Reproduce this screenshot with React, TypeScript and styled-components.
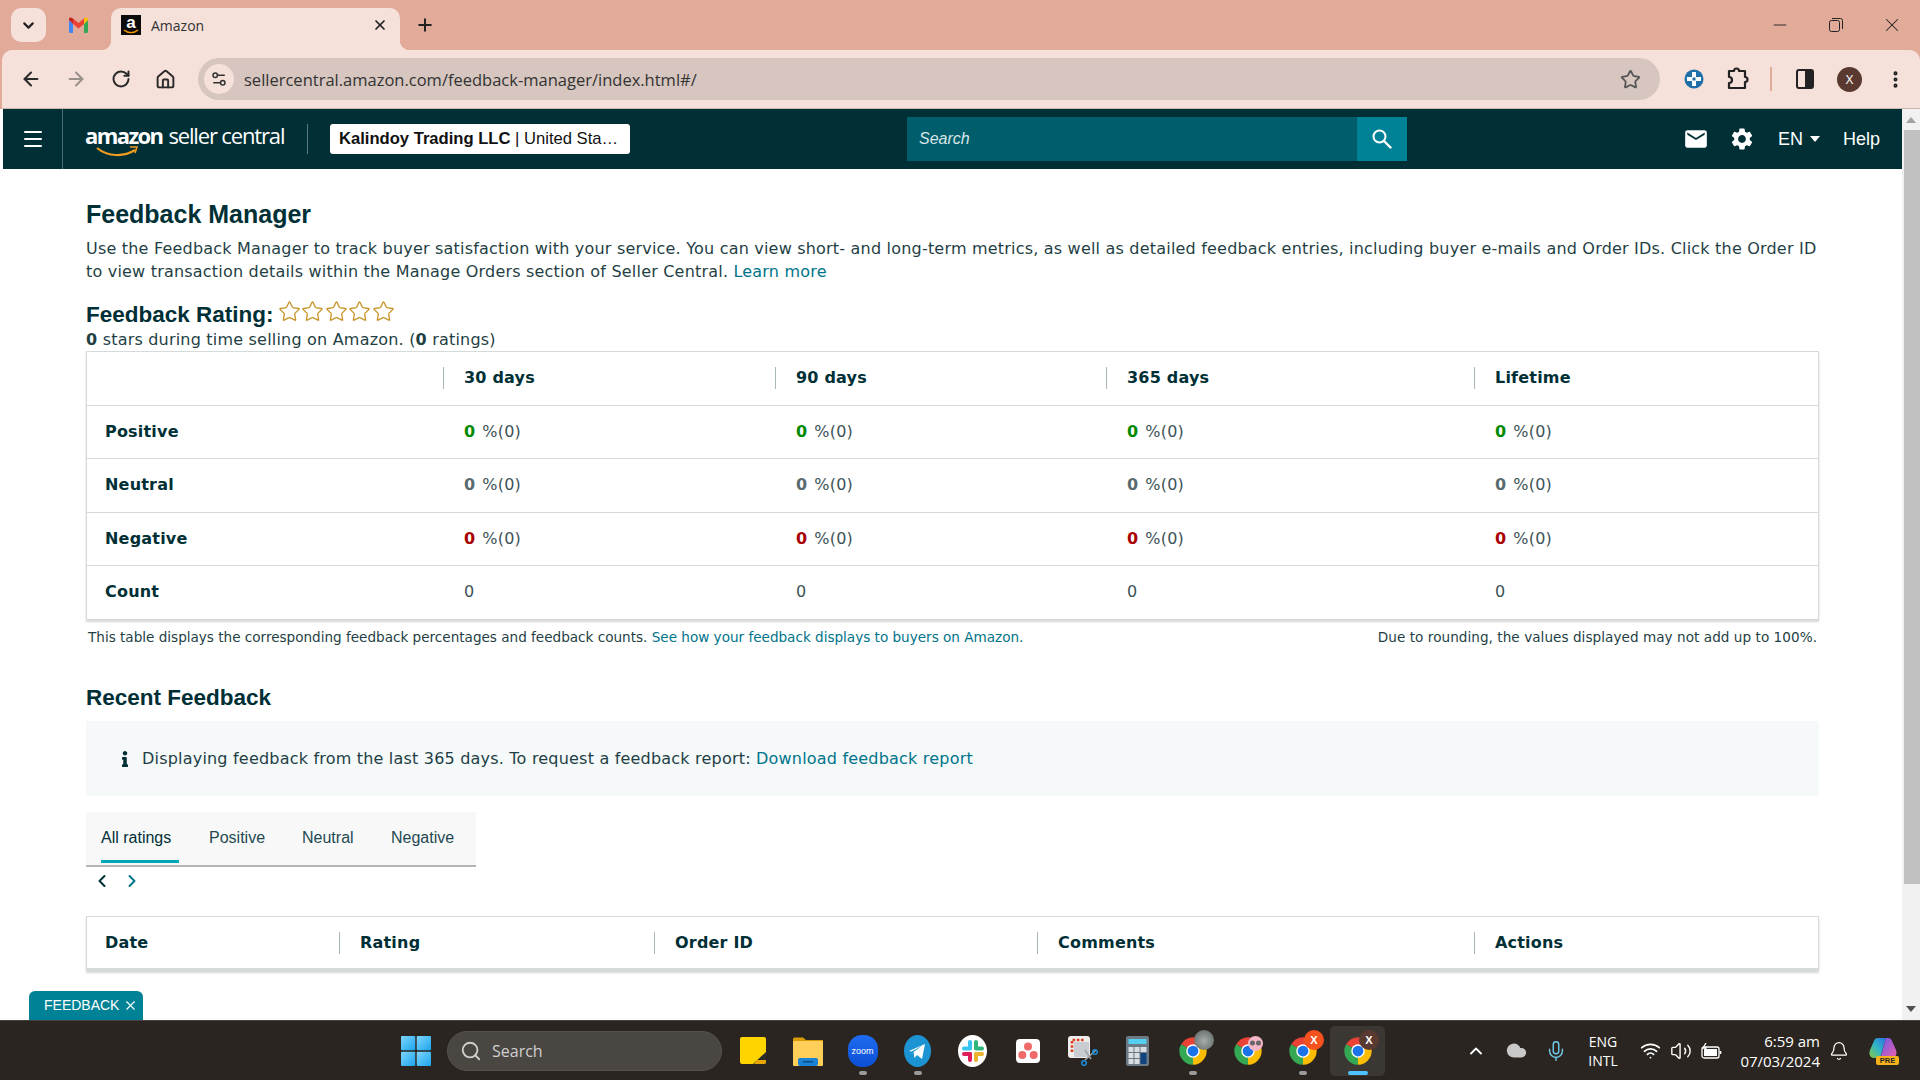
import React from "react";
import styled, { createGlobalStyle } from "styled-components";
import {
  ArrowLeft,
  ArrowRight,
  ChevronDown,
  ChevronLeft,
  ChevronRight,
  ChevronUp,
  Cloud,
  Bell,
  Home,
  Menu,
  Mic,
  MoreVertical,
  Plus,
  RotateCw,
  Search,
  Settings2,
  Star,
  Volume2,
  Wifi,
  X,
  Minus,
} from "lucide-react";
import { MdEmail, MdSettings } from "react-icons/md";
import { FaInfo } from "react-icons/fa";

const GlobalStyle = createGlobalStyle`
  html, body { margin: 0; padding: 0; background: #fff; overflow: hidden; }
  * { box-sizing: border-box; }
`;

const UI_FONT = `"Liberation Sans", Arial, sans-serif`;
const BODY_FONT = `"DejaVu Sans", Verdana, sans-serif`;
const WIN_FONT = `"Open Sans", "Noto Sans", sans-serif`;

const Screen = styled.div`
  width: 1920px;
  height: 1080px;
  display: flex;
  flex-direction: column;
  overflow: hidden;
  background: #fff;
`;

/* browser chrome */
const BrowserHead = styled.div`
  height: 109px;
  flex: none;
  background: #e2aa99;
`;

const TabStrip = styled.div`
  height: 50px;
  display: flex;
  align-items: flex-end;
  padding-left: 11px;
`;

const TabDropdown = styled.div`
  width: 35px;
  height: 34px;
  margin-bottom: 8px;
  background: #f5e0da;
  border-radius: 10px;
  display: flex;
  align-items: center;
  justify-content: center;
  color: #222;
`;

const InactiveTab = styled.div`
  width: 65px;
  height: 42px;
  padding-bottom: 8px;
  display: flex;
  align-items: center;
  justify-content: center;
`;

const ActiveTab = styled.div`
  position: relative;
  width: 289px;
  height: 42px;
  background: #f5e0da;
  border-radius: 10px 10px 0 0;
  display: flex;
  align-items: center;
  padding: 0 12px 8px 10px;
  gap: 10px;
  font: 14px ${WIN_FONT};
  color: #333;

  &::before,
  &::after {
    content: "";
    position: absolute;
    bottom: 0;
    width: 10px;
    height: 10px;
  }
  &::before {
    left: -10px;
    background: radial-gradient(circle at 0 0, transparent 10px, #f5e0da 10.5px);
  }
  &::after {
    right: -10px;
    background: radial-gradient(circle at 100% 0, transparent 10px, #f5e0da 10.5px);
  }
`;

const Favicon = styled.div`
  position: relative;
  width: 20px;
  height: 20px;
  background: #0b0b0b;
  color: #fff;
  font: bold 17px/15px ${UI_FONT};
  text-align: center;
`;

const FaviconSmile = styled.svg`
  position: absolute;
  left: 2px;
  bottom: 1px;
`;

const TabTitle = styled.span`
  flex: 1;
`;

const NewTab = styled.div`
  width: 50px;
  height: 42px;
  padding-bottom: 8px;
  display: flex;
  align-items: center;
  justify-content: center;
  color: #222;
`;

const WindowControls = styled.div`
  margin-left: auto;
  height: 50px;
  display: flex;
  align-items: center;
  color: #222;
`;

const WindowButton = styled.div`
  width: 56px;
  display: flex;
  justify-content: center;
`;

const Toolbar = styled.div`
  height: 59px;
  margin-left: 2px;
  background: #f5e0da;
  border-radius: 10px 10px 0 0;
  display: flex;
  align-items: center;
  padding-left: 6px;
  border-bottom: 1px solid #c9b6af;
`;

const NavButton = styled.div<{ $dim?: boolean }>`
  width: 45px;
  display: flex;
  justify-content: center;
  color: ${(p) => (p.$dim ? "#9b8f8b" : "#2a2a2a")};
`;

const UrlPill = styled.div`
  width: 1462px;
  height: 42px;
  margin-left: 10px;
  background: #d6c6bf;
  border-radius: 21px;
  display: flex;
  align-items: center;
  padding: 0 19px 0 6px;
`;

const SiteInfo = styled.div`
  width: 30px;
  height: 30px;
  border-radius: 50%;
  background: #f5e0da;
  display: flex;
  align-items: center;
  justify-content: center;
  color: #333;
`;

const UrlText = styled.span`
  margin-left: 10px;
  flex: 1;
  font: 16.5px ${WIN_FONT};
  color: #333;
`;

const ToolbarIcons = styled.div`
  display: flex;
  align-items: center;
  margin-left: 12px;
  color: #222;
`;

const ToolbarSlot = styled.div<{ $w: number }>`
  width: ${(p) => p.$w}px;
  display: flex;
  justify-content: center;
`;

const ToolbarRule = styled.div`
  width: 2px;
  height: 24px;
  background: #e2aa99;
  margin: 0 11px 0 10px;
`;

const Avatar = styled.div`
  width: 25px;
  height: 25px;
  border-radius: 50%;
  background: #5a3a30;
  color: #fff;
  font: 13px/25px ${WIN_FONT};
  text-align: center;
`;

/* page */
const PageArea = styled.div`
  position: relative;
  flex: 1;
  min-height: 0;
  display: flex;
  padding-left: 3px;
`;

const Page = styled.div`
  flex: 1;
  min-width: 0;
  display: flex;
  flex-direction: column;
`;

const SellerNav = styled.div`
  height: 60px;
  flex: none;
  background: #002f36;
  display: flex;
  align-items: center;
  color: #fff;
`;

const BurgerCell = styled.div`
  width: 60px;
  height: 100%;
  border-right: 1px solid #4d6b70;
  display: flex;
  align-items: center;
  justify-content: center;
`;

const Logo = styled.div`
  position: relative;
  margin-left: 22px;
  width: 201px;
  height: 40px;
  display: flex;
  align-items: baseline;
  gap: 6px;
  font-family: ${WIN_FONT};
  color: #fff;
  white-space: nowrap;
  padding-top: 1px;
`;

const LogoBrand = styled.span`
  font-size: 22px;
  font-weight: 700;
  letter-spacing: -1.6px;
`;

const LogoProduct = styled.span`
  font-size: 22px;
  font-weight: 400;
  letter-spacing: -1.15px;
`;

const LogoSmile = styled.svg`
  position: absolute;
  left: 11px;
  top: 27px;
`;

const NavRule = styled.div`
  width: 1px;
  height: 30px;
  background: #5d7a7e;
  margin: 0 22px 0 21px;
`;

const AccountBox = styled.div`
  width: 300px;
  height: 30px;
  background: #fff;
  border-radius: 3px;
  color: #111;
  font: 16.6px/30px ${UI_FONT};
  padding: 0 9px;
  white-space: nowrap;
`;

const SearchBox = styled.div`
  margin-left: 277px;
  width: 500px;
  height: 44px;
  background: #005d6b;
  display: flex;
  align-items: center;
  justify-content: space-between;
  padding-left: 12px;
  font: italic 16px ${UI_FONT};
  color: #d9e6e8;
`;

const SearchButton = styled.div`
  width: 50px;
  height: 44px;
  background: #008296;
  display: flex;
  align-items: center;
  justify-content: center;
  color: #fff;
`;

const NavTools = styled.div`
  margin-left: auto;
  display: flex;
  align-items: center;
  font: 18px ${UI_FONT};
  padding-right: 22px;
  gap: 23px;
`;

const MailGlyph = styled(MdEmail)`
  margin-right: -3px;
`;

const LangCaret = styled.span`
  display: inline-block;
  width: 0;
  height: 0;
  margin-left: 7px;
  vertical-align: 3px;
  border-left: 5.5px solid transparent;
  border-right: 5.5px solid transparent;
  border-top: 6px solid #fff;
`;

const Content = styled.div`
  flex: 1;
  padding: 30px 82px 0 83px;
  font: 16px/24px ${BODY_FONT};
  letter-spacing: 0.2px;
  color: #002f36;
`;

const PageTitle = styled.h1`
  margin: 0 0 8px;
  font: bold 25px/30px ${UI_FONT};
  letter-spacing: 0;
  color: #002f36;
`;

const Lead = styled.p`
  margin: 0;
  line-height: 23px;
  color: #1f3f45;
`;

const Link = styled.span`
  color: #00748a;
`;

const RatingRow = styled.div`
  margin-top: 16.5px;
  display: flex;
  align-items: center;
  height: 30px;
`;

const RatingTitle = styled.h2`
  margin: 0 4px 0 0;
  font: bold 22.5px/30px ${UI_FONT};
  letter-spacing: 0;
  color: #002f36;
`;

const Stars = styled.div`
  display: flex;
  color: #c9952b;
  margin-top: -7px;
  gap: 0.5px;
`;

const RatingNote = styled.div`
  height: 21px;
  line-height: 20px;
  color: #1f3f45;
`;

const DataTable = styled.div`
  width: 1733px;
  border: 1px solid #d5dbdb;
  box-shadow: 0 2px 2px rgba(0, 0, 0, 0.16);
  background: #fff;
`;

const DataRow = styled.div<{ $cols: string; $h: number }>`
  display: grid;
  grid-template-columns: ${(p) => p.$cols};
  height: ${(p) => p.$h}px;
  align-items: center;
  border-top: 1px solid #d5dbdb;

  &:first-child {
    border-top: 0;
  }
`;

const RowHead = styled.div`
  padding-left: 18px;
  font-weight: 700;
  color: #002f36;
`;

const HeadCell = styled.div<{ $rule?: boolean }>`
  padding-left: ${(p) => (p.$rule ? 20 : 18)}px;
  font-weight: 700;
  color: #002f36;
  height: 22px;
  line-height: 22px;
  border-left: ${(p) => (p.$rule ? "1px solid #aab7b8" : "0")};
`;

const ValueCell = styled.div`
  padding-left: 21px;
  color: #3d5358;
`;

const Num = styled.b<{ $tone: string }>`
  color: ${(p) => p.$tone};
  margin-right: 7px;
`;

const TableNote = styled.div`
  display: flex;
  justify-content: space-between;
  padding: 0 3px 0 2px;
  margin-top: 6px;
  font: 13.6px/22px ${BODY_FONT};
  letter-spacing: 0;
  color: #1f3f45;
`;

const NoteLeft = styled.span`
  letter-spacing: -0.015px;
`;

const NoteRight = styled.span`
  letter-spacing: 0.04px;
`;

const SectionTitle = styled.h2`
  margin: 35px 0 0;
  font: bold 22.5px/30px ${UI_FONT};
  letter-spacing: 0;
  color: #002f36;
`;

const InfoBox = styled.div`
  margin-top: 8px;
  width: 1733px;
  height: 75px;
  background: #f5f9fa;
  display: flex;
  align-items: center;
  padding: 1px 0 0 31px;
  color: #1f3f45;
`;

const InfoIcon = styled.span`
  width: 25px;
  color: #002f36;
  display: flex;
`;

const TabsBar = styled.div`
  margin-top: 16px;
  width: 390px;
  height: 55px;
  background: #f8f8f8;
  border-bottom: 2px solid #b4b4b4;
  display: flex;
  padding-left: 15px;
  font: 16px ${UI_FONT};
  letter-spacing: 0;
`;

const RatingTab = styled.div<{ $active?: boolean; $w: number }>`
  width: ${(p) => p.$w}px;
  height: 51px;
  line-height: 52px;
  color: ${(p) => (p.$active ? "#002f36" : "#1f4a52")};
  border-bottom: ${(p) => (p.$active ? "3px solid #00a8b5" : "0")};
`;

const Pager = styled.div`
  height: 28px;
  padding-left: 6px;
  display: flex;
  align-items: center;
  gap: 10px;
  color: #002f36;
`;

const PagerNext = styled.span`
  color: #00748a;
  display: flex;
`;

const OrdersTable = styled(DataTable)`
  margin-top: 21px;
  border-width: 1px 1px 3px;
  border-color: #d5dbdb;
  padding-top: 2px;
`;

const FeedbackTag = styled.div`
  position: absolute;
  left: 29px;
  bottom: 0;
  width: 114px;
  height: 29px;
  background: #008296;
  border-radius: 6px 6px 0 0;
  color: #fff;
  font: 14px/29px ${UI_FONT};
  padding-left: 15px;
  display: flex;
  align-items: center;
  gap: 4px;
`;

const Scrollbar = styled.div`
  width: 18px;
  flex: none;
  background: #f1f1f1;
  display: flex;
  flex-direction: column;
  align-items: center;
  padding-top: 8px;
`;

const ScrollArrow = styled.div<{ $up?: boolean }>`
  width: 0;
  height: 0;
  border-left: 5px solid transparent;
  border-right: 5px solid transparent;
  ${(p) => (p.$up ? "border-bottom: 6px solid #a3a3a3;" : "border-top: 6px solid #505050;")}
`;

const ScrollThumb = styled.div`
  width: 16px;
  height: 754px;
  margin: 7px 0 122px 2px;
  background: #c1c1c1;
`;

/* windows taskbar */
const Taskbar = styled.div`
  position: relative;
  height: 60px;
  flex: none;
  background: #2a2520;
  border-top: 1px solid #45413c;
  display: flex;
  align-items: center;
  padding-left: 388px;
  color: #fff;
  font-family: ${WIN_FONT};
`;

const TaskIcon = styled.div<{ $active?: boolean }>`
  position: relative;
  width: 55px;
  height: 50px;
  display: flex;
  align-items: center;
  justify-content: center;
  border-radius: 5px;
  background: ${(p) => (p.$active ? "#3b3733" : "transparent")};
`;

const RunDot = styled.span<{ $active?: boolean }>`
  position: absolute;
  bottom: 1px;
  left: 50%;
  width: ${(p) => (p.$active ? 20 : 8)}px;
  height: 4px;
  margin-left: ${(p) => (p.$active ? -10 : -4)}px;
  border-radius: 2px;
  background: ${(p) => (p.$active ? "#4cc2ff" : "#9a9a9a")};
`;

const TaskSearch = styled.div`
  width: 275px;
  height: 40px;
  margin: 0 3px 0 4px;
  border-radius: 20px;
  background: #4a4742;
  border: 1px solid #55524d;
  display: flex;
  align-items: center;
  gap: 10px;
  padding-left: 12px;
  font-size: 16px;
  color: #cfcfcf;
`;

const ZoomTile = styled.div`
  width: 30px;
  height: 32px;
  border-radius: 14px;
  background: linear-gradient(#1f6cf0, #0b4fd6);
  color: #fff;
  font: 9px/32px ${UI_FONT};
  text-align: center;
`;

const ChromeBadge = styled.div<{ $bg: string; $size?: number; $small?: boolean }>`
  position: absolute;
  width: ${(p) => (p.$small ? 15 : 20)}px;
  height: ${(p) => (p.$small ? 15 : 20)}px;
  top: ${(p) => (p.$small ? 10 : 4)}px;
  right: ${(p) => (p.$small ? 12 : 6)}px;
  border-radius: 50%;
  background: ${(p) => p.$bg};
  color: #fff;
  font: bold 11px/20px ${UI_FONT};
  text-align: center;
`;

const Tray = styled.div`
  position: absolute;
  left: 1456px;
  top: 0;
  height: 59px;
  display: flex;
  align-items: center;
  color: #fff;
`;

const TraySlot = styled.div<{ $w: number; $tint?: string }>`
  width: ${(p) => p.$w}px;
  display: flex;
  justify-content: center;
  color: ${(p) => p.$tint || "#fff"};
`;

const LangBlock = styled.div`
  width: 54px;
  font-size: 14px;
  line-height: 19px;
  text-align: center;
`;

const Clock = styled.div`
  width: 90px;
  font-size: 15px;
  line-height: 20px;
  text-align: right;
  white-space: nowrap;
`;

const CopilotWrap = styled.div`
  position: relative;
  width: 30px;
  height: 28px;
  margin-left: 11px;
`;

const PreTag = styled.span`
  position: absolute;
  right: 0;
  bottom: 0;
  width: 23px;
  height: 9px;
  border-radius: 2px;
  background: #f5b21a;
  color: #222;
  font: bold 7.5px/9px ${UI_FONT};
  text-align: center;
`;

const CalcIcon = () => (
  <svg width="23" height="30" viewBox="0 0 23 30">
    <rect width="23" height="30" rx="2" fill="#6c7a85" />
    <rect x="2.5" y="3" width="18" height="5" fill="#54d0f2" />
    {[0, 1, 2].map((r) =>
      [0, 1].map((c) => (
        <rect key={`${r}${c}`} x={2.5 + c * 6} y={11 + r * 6} width="5" height="5" fill="#d9dee2" />
      )),
    )}
    <rect x="14.5" y="11" width="6" height="5" fill="#d9dee2" />
    <rect x="14.5" y="17" width="6" height="11" fill="#11447f" />
  </svg>
);

const ChromeIcon = () => (
  <svg width="30" height="30" viewBox="0 0 24 24">
    <path d="M12 12 2.5 6.5A11 11 0 0 1 21.5 6.5Z" fill="#ea4335" />
    <path d="M12 12 21.5 6.5A11 11 0 0 1 12 23Z" fill="#fbbc04" />
    <path d="M12 12 12 23A11 11 0 0 1 2.5 6.5Z" fill="#34a853" />
    <circle cx="12" cy="12" r="5.4" fill="#fff" />
    <circle cx="12" cy="12" r="4.3" fill="#1a73e8" />
  </svg>
);

const GmailIcon = () => (
  <svg width="19" height="16" viewBox="0 0 19 16">
    <path d="M0 3v11.5A1.5 1.5 0 0 0 1.5 16H4V7Z" fill="#4285f4" />
    <path d="M15 16h2.5a1.5 1.5 0 0 0 1.5-1.5V3l-4 4Z" fill="#34a853" />
    <path d="M15 1.5V7l4-4V2C19 .5 17 0 16 1Z" fill="#fbbc04" />
    <path d="M4 7V1.5L9.5 6 15 1.5V7L9.5 11.5Z" fill="#ea4335" />
    <path d="M0 2v1l4 4V1.5L3 1C2 0 0 .5 0 2Z" fill="#c5221f" />
  </svg>
);

const WindowsLogo = () => (
  <svg width="30" height="30" viewBox="0 0 30 30">
    <defs>
      <linearGradient id="winA" x1="0" y1="0" x2="1" y2="1">
        <stop offset="0" stopColor="#7fd6fb" />
        <stop offset="1" stopColor="#1aa5ee" />
      </linearGradient>
    </defs>
    <rect width="14.3" height="14.3" rx="1" fill="url(#winA)" />
    <rect x="15.7" width="14.3" height="14.3" rx="1" fill="url(#winA)" />
    <rect y="15.7" width="14.3" height="14.3" rx="1" fill="url(#winA)" />
    <rect x="15.7" y="15.7" width="14.3" height="14.3" rx="1" fill="url(#winA)" />
  </svg>
);

const StickyIcon = () => (
  <svg width="26" height="27" viewBox="0 0 26 27">
    <rect width="26" height="27" rx="2" fill="#ffd500" />
    <path d="M26 15v10a2 2 0 0 1-2 2H13Z" fill="#2b2b2b" />
    <path d="M14 27h10a2 2 0 0 0 2-2v-2H17Z" fill="#e6a800" />
  </svg>
);

const FolderIcon = () => (
  <svg width="30" height="30" viewBox="0 0 30 30">
    <path d="M0 3a1.5 1.5 0 0 1 1.5-1.5H10L13 4h17v25H0Z" fill="#d99a06" />
    <rect y="5" width="30" height="25" rx="1" fill="#ffcf5a" />
    <rect x="5" y="22" width="20" height="8" rx="2" fill="#1a82d4" />
    <rect x="10" y="25" width="10" height="1.5" fill="#0b4f8a" />
  </svg>
);

const TelegramIcon = () => (
  <svg width="27" height="32" viewBox="0 0 27 32">
    <ellipse cx="13.5" cy="16" rx="13.5" ry="16" fill="#1c93d2" />
    <path d="M5 16 21 9l-3 15-5-4-2.5 3-1-6 9-6.5-11 6Z" fill="#fff" />
  </svg>
);

const SlackIcon = () => (
  <svg width="29" height="32" viewBox="0 0 29 32">
    <ellipse cx="14.5" cy="16" rx="14.5" ry="16" fill="#fff" />
    <rect x="10" y="5" width="4" height="10" rx="2" fill="#36c5f0" />
    <rect x="4" y="11.5" width="10" height="4" rx="2" fill="#36c5f0" />
    <rect x="16" y="5" width="4" height="10" rx="2" fill="#2eb67d" />
    <rect x="16" y="11.5" width="10" height="4" rx="2" fill="#2eb67d" />
    <rect x="16" y="17" width="4" height="10" rx="2" fill="#ecb22e" />
    <rect x="16" y="17" width="10" height="4" rx="2" fill="#ecb22e" />
    <rect x="10" y="17" width="4" height="10" rx="2" fill="#e01e5a" />
    <rect x="4" y="17" width="10" height="4" rx="2" fill="#e01e5a" />
  </svg>
);

const AsanaIcon = () => (
  <svg width="24" height="24" viewBox="0 0 24 24">
    <rect width="24" height="24" rx="4" fill="#fff" />
    <circle cx="12" cy="7.5" r="4" fill="#f06a6a" />
    <circle cx="6.3" cy="16" r="4" fill="#f06a6a" />
    <circle cx="17.7" cy="16" r="4" fill="#f06a6a" />
  </svg>
);

const SnipIcon = () => (
  <svg width="30" height="30" viewBox="0 0 30 30">
    <rect width="22" height="22" rx="3" fill="#eeeeee" />
    <path d="M4 16V4h12" fill="none" stroke="#d9411e" strokeWidth="2.6" strokeDasharray="2.6 1.6" />
    <rect x="6" y="6" width="15" height="15" fill="#c9ccd0" />
    <path d="M28 14 17 24M17 14l6 9" stroke="#a0a6ab" strokeWidth="1.6" />
    <circle cx="16" cy="27" r="2.3" fill="none" stroke="#1a8ad4" strokeWidth="1.6" />
    <circle cx="27" cy="16" r="2.3" fill="none" stroke="#1a8ad4" strokeWidth="1.6" />
  </svg>
);

const ExtensionIcon = () => (
  <svg width="20" height="20" viewBox="0 0 20 20">
    <circle cx="10" cy="10" r="9.5" fill="#1f6fa8" />
    <path d="M8 3h4v5h5v4h-5v5H8v-5H3V8h5Z" fill="#fff" />
    <rect x="8.5" y="8.5" width="3" height="3" fill="#1f6fa8" />
  </svg>
);

const PuzzleIcon = () => (
  <svg width="22" height="24" viewBox="0 0 22 24" fill="none" stroke="#222" strokeWidth="2.2" strokeLinejoin="round">
    <path d="M2 4h5a2.5 2.5 0 0 1 5 0h6v6a2.5 2.5 0 0 1 0 5v6H2v-5a2.5 2.5 0 0 0 0-6Z" />
  </svg>
);

const SidePanelIcon = () => (
  <svg width="18" height="20" viewBox="0 0 18 20">
    <rect x="1" y="1" width="16" height="18" rx="2" fill="none" stroke="#222" strokeWidth="2" />
    <rect x="9" y="1" width="8" height="18" fill="#222" />
  </svg>
);

const RestoreIcon = () => (
  <svg width="14" height="14" viewBox="0 0 14 14" fill="none" stroke="#222" strokeWidth="1">
    <rect x="0.5" y="2.5" width="10" height="11" rx="2" />
    <path d="M3 .5h8.5a2 2 0 0 1 2 2V11" />
  </svg>
);

const BatteryIcon = () => (
  <svg width="21" height="16" viewBox="0 0 21 16" fill="none" stroke="#fff" strokeWidth="1.3">
    <rect x="1" y="4" width="17" height="11" rx="2" />
    <rect x="3" y="6" width="13" height="7" fill="#fff" stroke="none" />
    <path d="M19.5 8v3" strokeWidth="1.6" />
    <path d="M5 0 2 5h3L4 8" />
  </svg>
);

const OneDriveIcon = () => <Cloud size={21} fill="#c8c8c8" color="#c8c8c8" />;

const CopilotIcon = () => (
  <svg width="28" height="24" viewBox="0 0 28 24">
    <defs>
      <linearGradient id="copA" x1="0" y1="1" x2="1" y2="0">
        <stop offset="0" stopColor="#8cc63f" />
        <stop offset="0.5" stopColor="#2fb6c9" />
        <stop offset="1" stopColor="#2b6fe0" />
      </linearGradient>
      <linearGradient id="copB" x1="0" y1="0" x2="1" y2="1">
        <stop offset="0" stopColor="#6a5be8" />
        <stop offset="1" stopColor="#ee5fae" />
      </linearGradient>
    </defs>
    <path d="M9 1h8l-6 20H5C1 21-.5 17 1 13L5 4c.6-1.8 2-3 4-3Z" fill="url(#copA)" />
    <path d="M17 1h2c2 0 3.4 1.2 4 3l4 9c1.300 3.600 0 8-4 8h-8l-4 1Z" fill="url(#copB)" />
  </svg>
);

const GlassesFace = () => (
  <svg width="15" height="15" viewBox="0 0 15 15">
    <circle cx="4.5" cy="7" r="2.5" fill="#666" />
    <circle cx="10.500" cy="7" r="2.5" fill="#666" />
  </svg>
);

const NavSearchIcon = () => (
  <svg width="20" height="20" viewBox="0 0 20 20" fill="none" stroke="#fff" strokeWidth="2">
    <circle cx="7.5" cy="7.5" r="6" />
    <path d="M12 12 18.500 18.500" strokeWidth="2.400" strokeLinecap="round" />
  </svg>
);

const feedbackColumns = "356px 332px 331px 368px 1fr";
const orderColumns = "252px 315px 383px 437px 1fr";

const periods = ["30 days", "90 days", "365 days", "Lifetime"];

const summaryRows = [
  { label: "Positive", tone: "#008a00" },
  { label: "Neutral", tone: "#5a6b70" },
  { label: "Negative", tone: "#a80000" },
];

const App: React.FC = () => {
  return (
    <>
      <GlobalStyle />
      <Screen>
        <BrowserHead>
          <TabStrip>
            <TabDropdown>
              <ChevronDown size={17} strokeWidth={3} />
            </TabDropdown>
            <InactiveTab>
              <GmailIcon />
            </InactiveTab>
            <ActiveTab>
              <Favicon>
                a
                <FaviconSmile width="16" height="5" viewBox="0 0 16 5">
                  <path d="M1 1c4 3.5 10 3.5 14 0" fill="none" stroke="#f90" strokeWidth="1.4" />
                </FaviconSmile>
              </Favicon>
              <TabTitle>Amazon</TabTitle>
              <X size={16} strokeWidth={2.6} color="#222" />
            </ActiveTab>
            <NewTab>
              <Plus size={20} strokeWidth={2.4} />
            </NewTab>
            <WindowControls>
              <WindowButton>
                <Minus size={20} strokeWidth={1.1} />
              </WindowButton>
              <WindowButton>
                <RestoreIcon />
              </WindowButton>
              <WindowButton>
                <X size={22} strokeWidth={1.1} />
              </WindowButton>
            </WindowControls>
          </TabStrip>
          <Toolbar>
            <NavButton>
              <ArrowLeft size={22} strokeWidth={2.2} />
            </NavButton>
            <NavButton $dim>
              <ArrowRight size={22} strokeWidth={2.2} />
            </NavButton>
            <NavButton>
              <RotateCw size={20} strokeWidth={2.4} />
            </NavButton>
            <NavButton>
              <Home size={21} strokeWidth={2.2} />
            </NavButton>
            <UrlPill>
              <SiteInfo>
                <Settings2 size={18} strokeWidth={2} />
              </SiteInfo>
              <UrlText>sellercentral.amazon.com/feedback-manager/index.html#/</UrlText>
              <Star size={21} strokeWidth={2} color="#555" />
            </UrlPill>
            <ToolbarIcons>
              <ToolbarSlot $w={44}>
                <ExtensionIcon />
              </ToolbarSlot>
              <ToolbarSlot $w={44}>
                <PuzzleIcon />
              </ToolbarSlot>
              <ToolbarRule />
              <ToolbarSlot $w={44}>
                <SidePanelIcon />
              </ToolbarSlot>
              <ToolbarSlot $w={45}>
                <Avatar>X</Avatar>
              </ToolbarSlot>
              <ToolbarSlot $w={46}>
                <MoreVertical size={21} strokeWidth={2.6} />
              </ToolbarSlot>
            </ToolbarIcons>
          </Toolbar>
        </BrowserHead>

        <PageArea>
          <Page>
            <SellerNav>
              <BurgerCell>
                <Menu size={24} strokeWidth={2} />
              </BurgerCell>
              <Logo>
                <LogoBrand>amazon</LogoBrand>
                <LogoProduct>seller central</LogoProduct>
                <LogoSmile width="42" height="12" viewBox="0 0 42 12">
                  <path d="M1 2c11 9 27 9 38 2" fill="none" stroke="#f29c1f" strokeWidth="2.2" />
                  <path d="M34 1h7l-2 6" fill="none" stroke="#f29c1f" strokeWidth="1.6" />
                </LogoSmile>
              </Logo>
              <NavRule />
              <AccountBox>
                <b>Kalindoy Trading LLC</b> | United Sta…
              </AccountBox>
              <SearchBox>
                Search
                <SearchButton>
                  <NavSearchIcon />
                </SearchButton>
              </SearchBox>
              <NavTools>
                <MailGlyph size={26} />
                <MdSettings size={26} />
                <span>
                  EN
                  <LangCaret />
                </span>
                <span>Help</span>
              </NavTools>
            </SellerNav>

            <Content>
              <PageTitle>Feedback Manager</PageTitle>
              <Lead>
                Use the Feedback Manager to track buyer satisfaction with your service. You can view short- and long-term metrics, as well as detailed feedback entries, including buyer e-mails and Order IDs. Click the Order ID to view transaction details within the Manage Orders section of Seller Central. <Link>Learn more</Link>
              </Lead>
              <RatingRow>
                <RatingTitle>Feedback Rating:</RatingTitle>
                <Stars>
                  {[0, 1, 2, 3, 4].map((i) => (
                    <Star key={i} size={23} strokeWidth={1.4} />
                  ))}
                </Stars>
              </RatingRow>
              <RatingNote>
                <b>0</b> stars during time selling on Amazon. (<b>0</b> ratings)
              </RatingNote>

              <DataTable>
                <DataRow $cols={feedbackColumns} $h={53}>
                  <HeadCell />
                  {periods.map((p) => (
                    <HeadCell key={p} $rule>
                      {p}
                    </HeadCell>
                  ))}
                </DataRow>
                {summaryRows.map((row) => (
                  <DataRow key={row.label} $cols={feedbackColumns} $h={53.5}>
                    <RowHead>{row.label}</RowHead>
                    {periods.map((p) => (
                      <ValueCell key={p}>
                        <Num $tone={row.tone}>0</Num>%(0)
                      </ValueCell>
                    ))}
                  </DataRow>
                ))}
                <DataRow $cols={feedbackColumns} $h={53.5}>
                  <RowHead>Count</RowHead>
                  {periods.map((p) => (
                    <ValueCell key={p}>0</ValueCell>
                  ))}
                </DataRow>
              </DataTable>
              <TableNote>
                <NoteLeft>
                  This table displays the corresponding feedback percentages and feedback counts. <Link>See how your feedback displays to buyers on Amazon.</Link>
                </NoteLeft>
                <NoteRight>Due to rounding, the values displayed may not add up to 100%.</NoteRight>
              </TableNote>

              <SectionTitle>Recent Feedback</SectionTitle>
              <InfoBox>
                <InfoIcon>
                  <FaInfo size={16} />
                </InfoIcon>
                <span>
                  Displaying feedback from the last 365 days. To request a feedback report: <Link>Download feedback report</Link>
                </span>
              </InfoBox>
              <TabsBar>
                <RatingTab $active $w={78}>All ratings</RatingTab>
                <RatingTab $w={30} />
                <RatingTab $w={93}>Positive</RatingTab>
                <RatingTab $w={89}>Neutral</RatingTab>
                <RatingTab $w={80}>Negative</RatingTab>
              </TabsBar>
              <Pager>
                <ChevronLeft size={20} strokeWidth={2.4} />
                <PagerNext>
                  <ChevronRight size={20} strokeWidth={2.4} />
                </PagerNext>
              </Pager>
              <OrdersTable>
                <DataRow $cols={orderColumns} $h={49}>
                  <HeadCell>Date</HeadCell>
                  <HeadCell $rule>Rating</HeadCell>
                  <HeadCell $rule>Order ID</HeadCell>
                  <HeadCell $rule>Comments</HeadCell>
                  <HeadCell $rule>Actions</HeadCell>
                </DataRow>
              </OrdersTable>
            </Content>
          </Page>
          <Scrollbar>
            <ScrollArrow $up />
            <ScrollThumb />
            <ScrollArrow />
          </Scrollbar>
          <FeedbackTag>
            FEEDBACK
            <X size={15} strokeWidth={1.8} />
          </FeedbackTag>
        </PageArea>

        <Taskbar>
          <TaskIcon>
            <WindowsLogo />
          </TaskIcon>
          <TaskSearch>
            <Search size={22} strokeWidth={2} />
            Search
          </TaskSearch>
          <TaskIcon>
            <StickyIcon />
          </TaskIcon>
          <TaskIcon>
            <FolderIcon />
          </TaskIcon>
          <TaskIcon>
            <ZoomTile>zoom</ZoomTile>
            <RunDot />
          </TaskIcon>
          <TaskIcon>
            <TelegramIcon />
            <RunDot />
          </TaskIcon>
          <TaskIcon>
            <SlackIcon />
          </TaskIcon>
          <TaskIcon>
            <AsanaIcon />
          </TaskIcon>
          <TaskIcon>
            <SnipIcon />
          </TaskIcon>
          <TaskIcon>
            <CalcIcon />
          </TaskIcon>
          <TaskIcon>
            <ChromeIcon />
            <ChromeBadge $bg="radial-gradient(circle at 50% 55%, #a8aca8, #55605e)" />
            <RunDot />
          </TaskIcon>
          <TaskIcon>
            <ChromeIcon />
            <ChromeBadge $bg="#f5b5c9" $small>
              <GlassesFace />
            </ChromeBadge>
          </TaskIcon>
          <TaskIcon>
            <ChromeIcon />
            <ChromeBadge $bg="#f4511e">X</ChromeBadge>
            <RunDot />
          </TaskIcon>
          <TaskIcon $active>
            <ChromeIcon />
            <ChromeBadge $bg="#5a3a30">X</ChromeBadge>
            <RunDot $active />
          </TaskIcon>
          <Tray>
            <TraySlot $w={40}>
              <ChevronUp size={20} strokeWidth={2.2} />
            </TraySlot>
            <TraySlot $w={40}>
              <OneDriveIcon />
            </TraySlot>
            <TraySlot $w={40} $tint="#6fc8e6">
              <Mic size={22} strokeWidth={1.6} />
            </TraySlot>
            <LangBlock>
              ENG
              <br />
              INTL
            </LangBlock>
            <TraySlot $w={40}>
              <Wifi size={21} strokeWidth={2} />
            </TraySlot>
            <TraySlot $w={22}>
              <Volume2 size={22} strokeWidth={1.5} />
            </TraySlot>
            <TraySlot $w={38}>
              <BatteryIcon />
            </TraySlot>
            <Clock>
              6:59 am
              <br />
              07/03/2024
            </Clock>
            <TraySlot $w={38}>
              <Bell size={20} strokeWidth={1.5} />
            </TraySlot>
            <CopilotWrap>
              <CopilotIcon />
              <PreTag>PRE</PreTag>
            </CopilotWrap>
          </Tray>
        </Taskbar>
      </Screen>
    </>
  );
};

export default App;
